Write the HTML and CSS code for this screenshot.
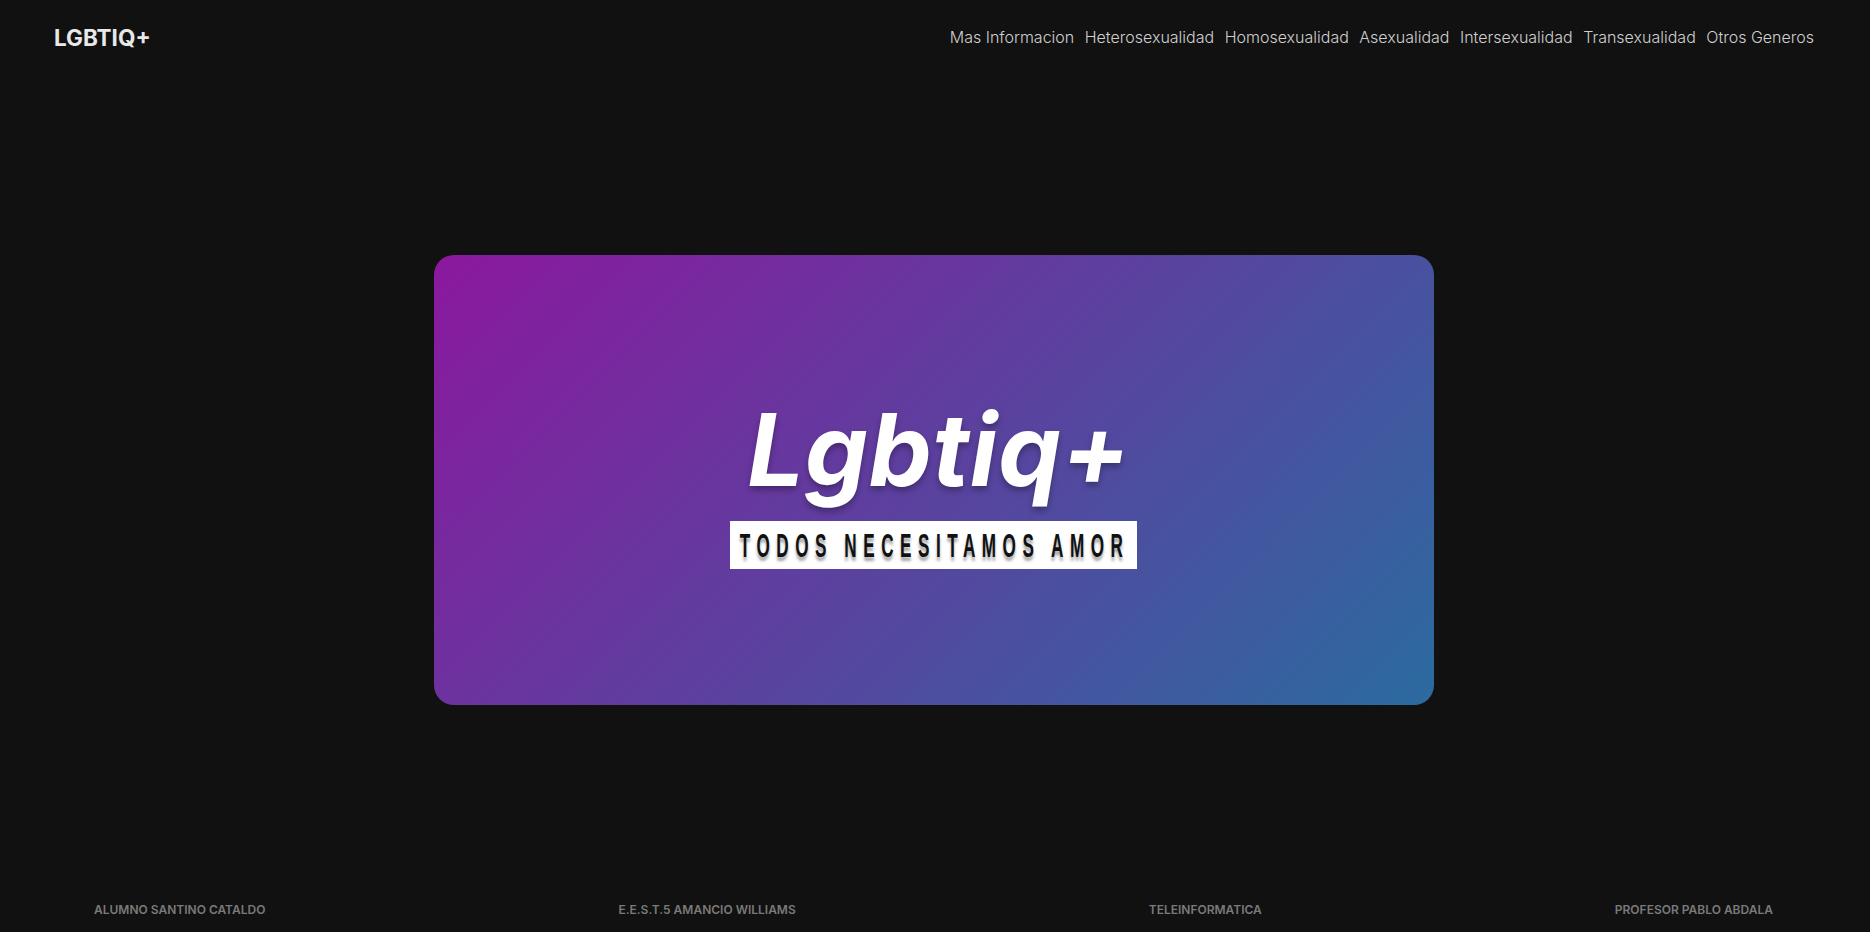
FILE: index.html
```html
<!DOCTYPE html>
<html lang="es">
<head>
<meta charset="utf-8">
<title>LGBTIQ+</title>
<link rel="stylesheet" href="styles.css">
</head>
<body>
<header class="site-header">
  <div class="logo">LGBTIQ+</div>
  <nav class="nav">
    <a href="#">Mas Informacion</a>
    <a href="#">Heterosexualidad</a>
    <a href="#">Homosexualidad</a>
    <a href="#">Asexualidad</a>
    <a href="#">Intersexualidad</a>
    <a href="#">Transexualidad</a>
    <a href="#">Otros Generos</a>
  </nav>
</header>
<main class="main">
  <section class="hero-card">
    <h1 class="hero-title">Lgbtiq+</h1>
    <div class="hero-tag"><span class="hero-tag-text">TODOS NECESITAMOS AMOR</span></div>
  </section>
</main>
<footer class="site-footer">
  <span>ALUMNO SANTINO CATALDO</span>
  <span>E.E.S.T.5 AMANCIO WILLIAMS</span>
  <span>TELEINFORMATICA</span>
  <span>PROFESOR PABLO ABDALA</span>
</footer>
</body>
</html>
```

FILE: styles.css
```css
* { box-sizing: border-box; }
html, body { height: 100%; }
body {
  margin: 0;
  background: #111111;
  font-family: Inter, "Noto Sans", sans-serif;
  color: #eee;
  display: flex;
  flex-direction: column;
  min-height: 100vh;
}
.site-header {
  height: 74px;
  display: flex;
  align-items: center;
  justify-content: space-between;
  padding: 0 56px 0 54px;
  flex: none;
}
.logo {
  font-size: 22.5px;
  font-weight: 700;
  color: #e8e8e8;
}
.nav {
  display: flex;
  gap: 10.5px;
}
.nav a {
  color: #d0d0d0;
  text-decoration: none;
  font-size: 16px;
  font-weight: 300;
}
.main {
  flex: 1;
  display: flex;
  align-items: center;
  justify-content: center;
}
.hero-card {
  width: 1000px;
  height: 450px;
  border-radius: 20px;
  background: linear-gradient(135deg, #8b189e 0%, #2b6ba0 100%);
  display: flex;
  flex-direction: column;
  align-items: center;
  justify-content: center;
  padding-top: 9px;
  margin-left: -2px;
}
.hero-title {
  margin: 0 0 21px 10px;
  font-size: 100px;
  line-height: 100px;
  font-weight: 700;
  font-style: italic;
  letter-spacing: 0.8px;
  color: #ffffff;
  text-shadow: 0 4px 6px rgba(0, 0, 0, 0.3);
}
.hero-tag {
  background: #ffffff;
  height: 48px;
  width: 407px;
  display: flex;
  align-items: center;
  justify-content: center;
  margin-left: -2px;
}
.hero-tag-text {
  display: inline-block;
  flex: none;
  white-space: nowrap;
  font-family: "Liberation Sans", Arial, sans-serif;
  font-weight: 700;
  font-size: 33px;
  line-height: 1;
  letter-spacing: 12.5px;
  margin-right: -12.5px;
  color: #111;
  transform: translateX(-5px) scaleX(0.52);
  text-shadow: 0 4px 4px rgba(0, 0, 0, 0.35);
}
.site-footer {
  height: 46px;
  flex: none;
  display: flex;
  align-items: center;
  justify-content: space-between;
  padding: 0 97px 0 94px;
  font-size: 12px;
  font-weight: 600;
  color: #7a7a7a;
}
```
